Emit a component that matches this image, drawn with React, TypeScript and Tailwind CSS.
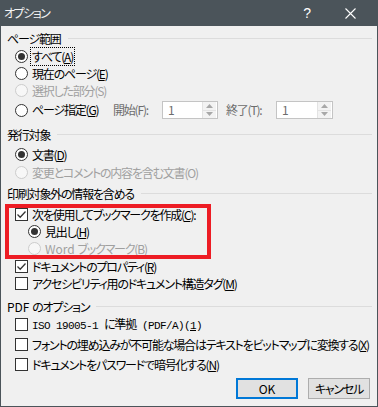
import React from 'react';

const font = "font-['Noto_Sans_CJK_JP','Noto_Sans',sans-serif] [font-feature-settings:'palt'] tracking-[-1.2px]";
const mono = "font-['Liberation_Mono','Noto_Sans_CJK_JP',monospace] text-[11px] tracking-[-0.6px]";

function Radio({ checked = false, disabled = false }: { checked?: boolean; disabled?: boolean }) {
  return (
    <span
      className={`w-[13px] h-[13px] rounded-full border flex items-center justify-center shrink-0 ${
        disabled ? 'border-[#cccccc] bg-[#f7f7f7]' : 'border-[#333333] bg-white'
      }`}
    >
      {checked && <span className="w-[7px] h-[7px] rounded-full bg-[#333333]" />}
    </span>
  );
}

function Check({ checked = false }: { checked?: boolean }) {
  return (
    <span className="w-[13px] h-[13px] border border-[#333333] bg-white flex items-center justify-center shrink-0">
      {checked && (
        <svg width="11" height="11" viewBox="0 0 11 11">
          <path d="M1.5 5.5 L4.2 8.2 L9.5 2.5" fill="none" stroke="#333333" strokeWidth="1.3" />
        </svg>
      )}
    </span>
  );
}

function Header({ label, className = '' }: { label: React.ReactNode; className?: string }) {
  return (
    <div className={`h-[17px] flex items-center pl-[6px] pr-[5px] ${className}`}>
      <span className="text-[12px] leading-none text-black whitespace-nowrap">{label}</span>
      <span className="flex-1 h-px bg-[#dcdcdc] ml-[7px]" />
    </div>
  );
}

function Key({ k }: { k: string }) {
  return (
    <>
      (<u className="underline-offset-[1px]">{k}</u>)
    </>
  );
}

function NumBox({ w }: { w: string }) {
  return (
    <div className={`${w} h-[18px] border border-[#c4c4c4] bg-white flex`}>
      <span className="flex-1 pl-[5px] text-[12px] leading-[16px] text-[#6d6d6d]">1</span>
      <div className="w-[14px] flex flex-col border-l border-[#e3e3e3] bg-[#f3f3f3] mr-[1px]">
        <div className="flex-1 flex items-center justify-center border-b border-[#e3e3e3]">
          <svg width="7" height="4" viewBox="0 0 7 4">
            <path d="M0 4 L3.5 0 L7 4 Z" fill="#a8a8a8" />
          </svg>
        </div>
        <div className="flex-1 flex items-center justify-center">
          <svg width="7" height="4" viewBox="0 0 7 4">
            <path d="M0 0 L3.5 4 L7 0 Z" fill="#a8a8a8" />
          </svg>
        </div>
      </div>
    </div>
  );
}

function Row({
  control,
  children,
  disabled = false,
  indent = false,
  className = '',
}: {
  control: React.ReactNode;
  children: React.ReactNode;
  disabled?: boolean;
  indent?: boolean;
  className?: string;
}) {
  return (
    <div className={`h-[17px] flex items-center ${indent ? 'pl-[27px]' : 'pl-[14px]'} ${className}`}>
      {control}
      <span
        className={`ml-[4px] text-[12px] leading-none whitespace-nowrap ${
          disabled ? 'text-[#a0a0a0]' : 'text-black'
        }`}
      >
        {children}
      </span>
    </div>
  );
}

export default function App() {
  return (
    <div className={`relative w-[378px] h-[407px] bg-[#f0f0f0] border-x border-b border-[#4b545a] flex flex-col ${font}`}>
      {/* Title bar */}
      <div className="h-[26px] bg-[#4b545a] flex items-center -mx-px px-[4px] shrink-0">
        <span className="text-[12px] text-[#f2f2f2] leading-none tracking-[-1.5px]">オプション</span>
        <span className="ml-auto mr-[34px] text-[14px] text-white leading-none font-['Liberation_Sans',sans-serif] tracking-normal">?</span>
        <svg width="11" height="11" viewBox="0 0 11 11" className="mr-[18px]">
          <path d="M0.5 0.5 L10.5 10.5 M10.5 0.5 L0.5 10.5" stroke="#ffffff" strokeWidth="1.1" />
        </svg>
      </div>

      <Header label="ページ範囲" className="mt-[4px]" />
      <Row className="mt-[1px]" control={<Radio checked />}>
        <span className="border border-dotted border-black px-[1px] -mx-[2px]">
          すべて<Key k="A" />
        </span>
      </Row>
      <Row control={<Radio />}>
        現在のページ<Key k="E" />
      </Row>
      <Row control={<Radio disabled />} disabled>
        選択した部分(S)
      </Row>
      <div className="h-[20px] mt-[1px] flex items-center pl-[14px]">
        <Radio />
        <span className="ml-[4px] w-[81px] text-[12px] leading-none whitespace-nowrap">
          ページ指定<Key k="G" />
        </span>
        <span className="w-[49px] text-[12px] leading-none text-[#6d6d6d]">開始(F):</span>
        <NumBox w="w-[56px]" />
        <span className="ml-[8px] w-[50px] text-[12px] leading-none text-[#6d6d6d]">終了(T):</span>
        <NumBox w="w-[57px]" />
      </div>

      <Header label="発行対象" className="mt-[6px]" />
      <Row className="mt-[3px]" control={<Radio checked />}>
        文書<Key k="D" />
      </Row>
      <Row className="mt-[1px]" control={<Radio disabled />} disabled>
        変更とコメントの内容を含む文書(O)
      </Row>

      <Header label="印刷対象外の情報を含める" className="mt-[4px]" />
      <Row className="mt-[4px]" control={<Check checked />}>
        次を使用してブックマークを作成<Key k="C" />:
      </Row>
      <Row indent control={<Radio checked />}>
        見出し<Key k="H" />
      </Row>
      <Row indent control={<Radio disabled />} disabled>
        <span className="tracking-normal">Word </span>ブックマーク(B)
      </Row>
      <Row className="mt-[1px]" control={<Check checked />}>
        ドキュメントのプロパティ<Key k="R" />
      </Row>
      <Row control={<Check />}>
        アクセシビリティ用のドキュメント構造タグ<Key k="M" />
      </Row>

      <Header
        label={
          <>
            <span className="tracking-normal">PDF </span>のオプション
          </>
        }
        className="mt-[6px]"
      />
      <Row className="mt-[1px]" control={<Check />}>
        <span className={mono}>ISO 19005-1 </span>に準拠<span className={mono}> (PDF/A)(<u>1</u>)</span>
      </Row>
      <Row className="mt-[3px]" control={<Check />}>
        フォントの埋め込みが不可能な場合はテキストをビットマップに変換する<Key k="X" />
      </Row>
      <Row className="mt-[3px]" control={<Check />}>
        ドキュメントをパスワードで暗号化する<Key k="N" />
      </Row>

      <div className="mt-[5px] flex justify-end pr-[7px]">
        <button className="w-[62px] h-[21px] border-2 border-[#0078d7] bg-[#e1e1e1] text-[12px] leading-none text-black tracking-normal">
          OK
        </button>
        <button className="ml-[10px] w-[62px] h-[21px] border border-[#adadad] bg-[#e1e1e1] text-[12px] leading-none text-black">
          キャンセル
        </button>
      </div>

      {/* red annotation box */}
      <div className="absolute left-[4px] top-[204px] w-[206px] h-[55px] border-4 border-[#ed1c24] pointer-events-none" />
    </div>
  );
}
